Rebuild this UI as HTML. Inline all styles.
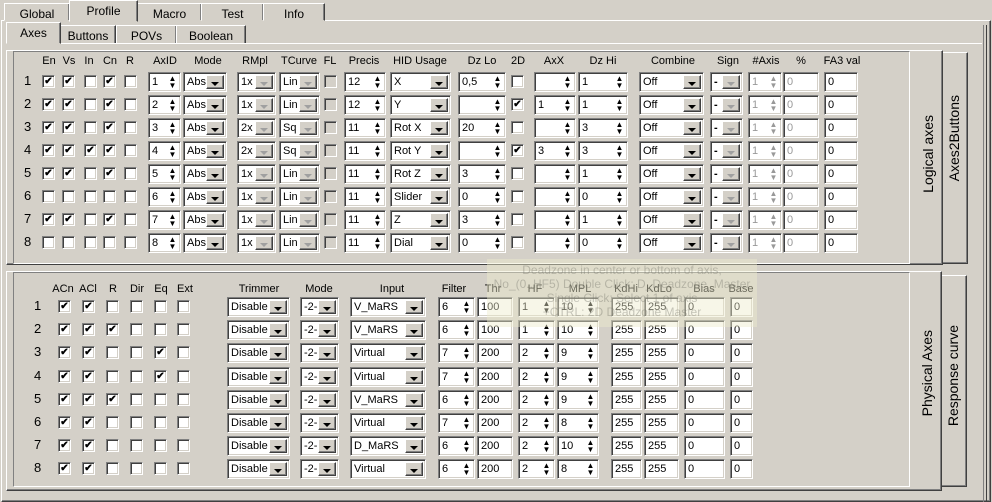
<!DOCTYPE html>
<html><head><meta charset="utf-8">
<style>
*{box-sizing:border-box}
body{margin:0;width:992px;height:502px;background:#d4d0c8;font-family:"Liberation Sans",sans-serif;font-size:11px;color:#000;position:relative;overflow:hidden}
.a{position:absolute}
.tab{position:absolute;border:1px solid;border-color:#fff #404040 transparent #fff;box-shadow:inset -1px 0 #808080;text-align:center;font-size:12px;background:#d4d0c8}
.panel{position:absolute;border:1px solid;border-color:#fff #404040 #404040 #fff;box-shadow:inset -1px -1px #808080}
.cb{position:absolute;width:13px;height:13px;background:#fff;border:1px solid;border-color:#808080 #fff #fff #808080;box-shadow:inset 1px 1px #404040,inset -1px -1px #d4d0c8;font-size:10px;line-height:11px;text-align:center;font-weight:bold}
.cb.dis{background:#d4d0c8}
.ed{position:absolute;height:20px;background:#fff;border:1px solid;border-color:#808080 #fff #fff #808080;box-shadow:inset 1px 1px #404040,inset -1px -1px #d4d0c8;padding:3px 0 0 3px;font-size:11px;white-space:nowrap;overflow:hidden}
.sp{position:absolute;right:3px;top:2px;width:9px;font-size:8px;line-height:7px;text-align:center}
.btn{position:absolute;right:2px;top:2px;bottom:2px;width:18px;background:#d4d0c8;border:1px solid;border-color:#fff #404040 #404040 #fff;box-shadow:inset -1px -1px #808080}
.btn:after{content:"";position:absolute;left:4px;top:6px;border-left:4px solid transparent;border-right:4px solid transparent;border-top:4px solid #000}
.btn.g:after{border-top-color:#a0a0a0}
.h{position:absolute;font-size:11px;text-align:center;white-space:nowrap}
.n{position:absolute;font-size:13px}
.vt{position:absolute;font-size:14px;writing-mode:vertical-rl;transform:rotate(180deg);white-space:nowrap}
</style></head><body>
<div class="panel" style="left:1px;top:20px;width:990px;height:482px"></div>
<div class="a" style="left:983px;top:25px;width:1px;height:477px;background:#808080"></div>
<div class="a" style="left:986px;top:25px;width:1px;height:477px;background:#404040"></div>
<div class="tab" style="left:4px;top:3px;width:66px;height:18px;padding-top:3px">Global</div>
<div class="tab" style="left:137px;top:3px;width:65px;height:18px;padding-top:3px">Macro</div>
<div class="tab" style="left:201px;top:3px;width:63px;height:18px;padding-top:3px">Test</div>
<div class="tab" style="left:263px;top:3px;width:62px;height:18px;padding-top:3px">Info</div>
<div class="tab" style="left:69px;top:0px;width:69px;height:22px;padding-top:3px;z-index:2">Profile</div>
<div class="tab" style="left:60px;top:25px;width:56px;height:19px;padding-top:3px">Buttons</div>
<div class="tab" style="left:116px;top:25px;width:61px;height:19px;padding-top:3px">POVs</div>
<div class="tab" style="left:176px;top:25px;width:70px;height:19px;padding-top:3px">Boolean</div>
<div class="tab" style="left:6px;top:22px;width:55px;height:22px;padding-top:3px;z-index:2">Axes</div>
<div class="a" style="left:6px;top:43px;width:976px;height:1px;background:#fff"></div>
<div class="panel" style="left:942px;top:52px;width:26px;height:212px"></div>
<div class="vt" style="left:946px;top:95px">Axes2Buttons</div>
<div class="panel" style="left:6px;top:50px;width:937px;height:215px"></div>
<div class="vt" style="left:920px;top:115px">Logical axes</div>
<div class="a" style="left:13px;top:51px;width:897px;height:213px;border:1px solid;border-color:#808080 #fff #fff #808080"></div>
<div class="panel" style="left:941px;top:275px;width:26px;height:212px"></div>
<div class="vt" style="left:945px;top:325px">Response curve</div>
<div class="panel" style="left:6px;top:271px;width:936px;height:220px"></div>
<div class="vt" style="left:919px;top:330px">Physical Axes</div>
<div class="a" style="left:13px;top:272px;width:897px;height:215px;border:1px solid;border-color:#808080 #fff #fff #808080"></div>
<div id="c"></div>
<div class="a" style="left:487px;top:259px;width:270px;height:68px;background:rgba(238,236,205,0.45);color:rgba(120,120,110,0.4);font-size:12px;line-height:14px;padding:4px 6px;text-align:center">Deadzone in center or bottom of axis,<br>No_(0..HF5) Double Click: D_Deadzone_Master<br>Single Click: Select 1 of axis<br>+CTRL: 2D Deadzone Master</div>
<script>
var c=document.getElementById('c'),H='';
function cb(x,y,k){H+='<div class="cb" style="left:'+x+'px;top:'+y+'px">'+(k?'&#10004;':'')+'</div>';}
function sp(x,y,w,t,g){H+='<div class="ed" style="left:'+x+'px;top:'+y+'px;width:'+w+'px;'+(g?'color:#999':'')+'">'+t+'<div class="sp">&#9650;<br>&#9660;</div></div>';}
function ed(x,y,w,t){H+='<div class="ed" style="left:'+x+'px;top:'+y+'px;width:'+w+'px">'+t+'</div>';}
function cm(x,y,w,t,g){H+='<div class="ed" style="left:'+x+'px;top:'+y+'px;width:'+w+'px">'+t+'<div class="btn'+(g?' g':'')+'"></div></div>';}
function hd(x,t){H+='<div class="h" style="left:'+(x-30)+'px;width:60px;top:'+hy+'px">'+t+'</div>';}
var hy=55;
[[49,'En'],[69,'Vs'],[89,'In'],[110,'Cn'],[130,'R'],[165,'AxID'],[208,'Mode'],[255,'RMpl'],[299,'TCurve'],[330,'FL'],[364,'Precis'],[420,'HID Usage'],[482,'Dz Lo'],[518,'2D'],[554,'AxX'],[603,'Dz Hi'],[673,'Combine'],[728,'Sign'],[766,'#Axis'],[801,'%'],[842,'FA3 val']].forEach(function(a){hd(a[0],a[1])});
var U=[[1,1,0,1,0],[1,1,0,1,0],[1,1,0,1,0],[1,1,1,1,0],[1,1,0,1,0],[0,0,0,0,0],[1,1,0,1,0],[0,0,0,0,0]];
var rm=['1x','1x','2x','2x','1x','1x','1x','1x'],tc=['Lin','Lin','Sq','Sq','Lin','Lin','Lin','Lin'],pr=['12','12','11','11','11','11','11','11'],
hid=['X','Y','Rot X','Rot Y','Rot Z','Slider','Z','Dial'],dl=['0,5','','20','','3','0','3','0'],d2=[0,1,0,1,0,0,0,0],ax=['','1','','3','','','',''],dh=['1','1','3','3','1','0','1','0'];
for(var i=0;i<8;i++){var y=72+i*23,cy=y+3;
H+='<div class="n" style="left:24px;top:'+(cy-2)+'px">'+(i+1)+'</div>';
[42,62,84,103,124].forEach(function(x,j){cb(x,cy,U[i][j])});
sp(148,y,33,i+1);cm(183,y,44,'Abs');cm(237,y,39,rm[i],1);cm(279,y,41,tc[i],1);
H+='<div class="cb dis" style="left:324px;top:'+cy+'px"></div>';
sp(344,y,42,pr[i]);cm(390,y,61,hid[i]);sp(458,y,48,dl[i]);cb(511,cy,d2[i]);sp(534,y,42,ax[i]);sp(578,y,50,dh[i]);
cm(639,y,65,'Off');cm(710,y,33,'<b>-</b>',1);sp(748,y,34,'1',1);H+='<div class="ed" style="left:783px;top:'+y+'px;width:36px;color:#999">0</div>';ed(824,y,34,'0');}
hy=283;
[[63,'ACn'],[88,'ACl'],[113,'R'],[137,'Dir'],[161,'Eq'],[185,'Ext'],[259,'Trimmer'],[319,'Mode'],[392,'Input'],[454,'Filter'],[493,'Thr'],[535,'HF'],[580,'MPL'],[626,'KdHi'],[659,'KdLo'],[704,'Bias'],[741,'Base']].forEach(function(a){hd(a[0],a[1])});
var L=[[1,1,0,0,0,0],[1,1,1,0,0,0],[1,1,0,0,1,0],[1,1,0,0,1,0],[1,1,1,0,0,0],[1,1,0,0,0,0],[1,1,0,0,0,0],[1,1,0,0,0,0]];
var inp=['V_MaRS','V_MaRS','Virtual','Virtual','V_MaRS','Virtual','D_MaRS','Virtual'],fi=[6,6,7,7,6,7,6,6],th=[100,100,200,200,200,200,200,200],hf=[1,1,2,2,2,2,2,2],mp=[10,10,9,9,9,8,10,8];
for(var i=0;i<8;i++){var y=Math.round(297+i*23.2),cy=y+3;
H+='<div class="n" style="left:34px;top:'+(cy-2)+'px">'+(i+1)+'</div>';
[58,82,106,130,154,177].forEach(function(x,j){cb(x,cy,L[i][j])});
cm(227,y,63,'Disable');cm(300,y,39,'-2-');cm(350,y,76,inp[i]);sp(438,y,37,fi[i]);ed(477,y,36,th[i]);sp(518,y,37,hf[i]);sp(557,y,42,mp[i]);
ed(611,y,31,'255');ed(644,y,35,'255');ed(684,y,41,'0');ed(730,y,23,'0');}
c.innerHTML=H;
</script>
</body></html>
